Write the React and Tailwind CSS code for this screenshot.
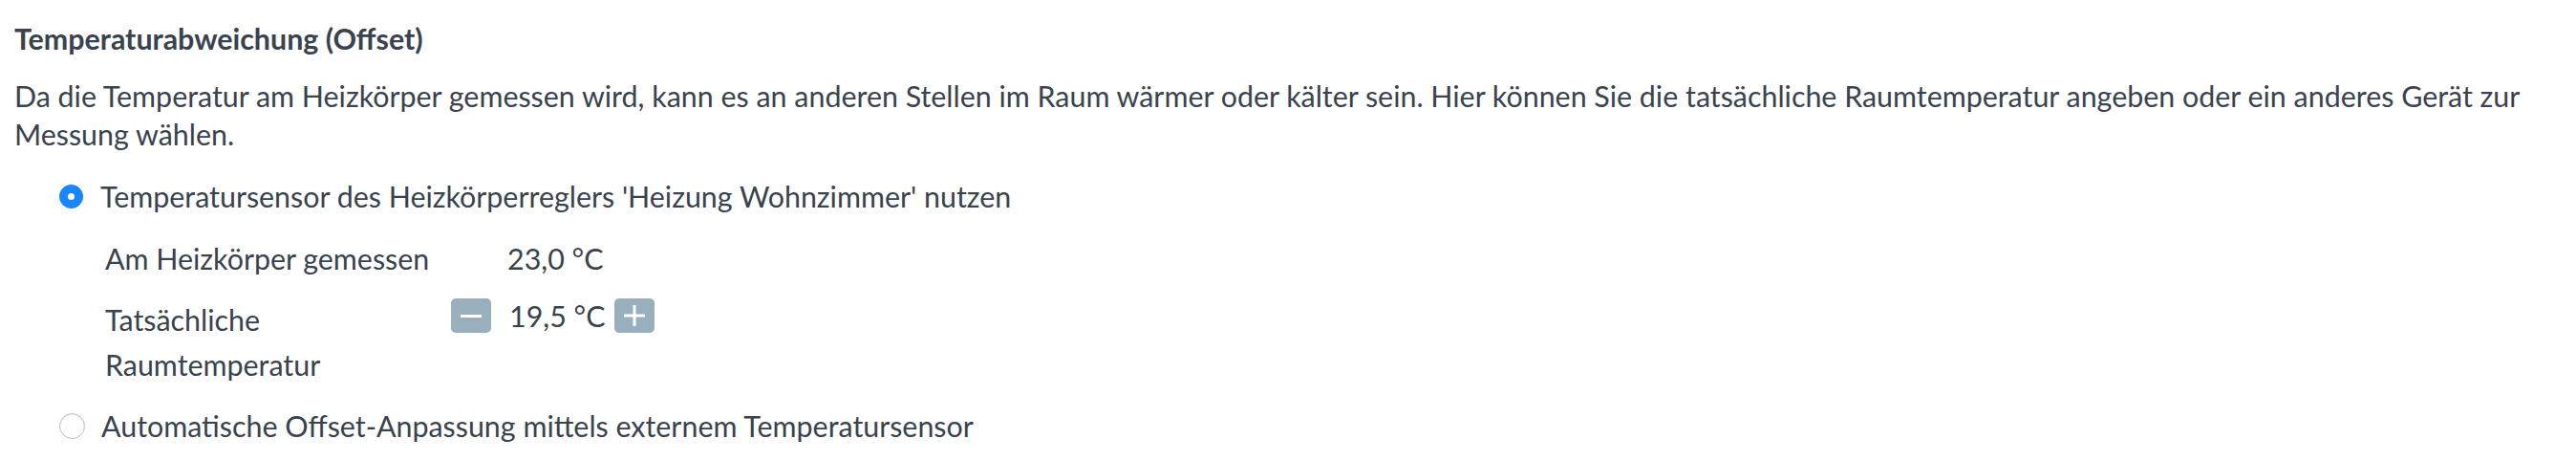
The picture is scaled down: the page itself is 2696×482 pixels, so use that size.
import React from "react";

function StepButton({ children, className = "" }) {
  return (
    <button className={`flex h-[36px] w-[42px] items-center justify-center rounded-[5px] bg-[#9aafbd] ${className}`}>
      {children}
    </button>
  );
}

export default function App() {
  return (
    <div className="min-h-[482px] bg-white px-[15px] pt-[20px] text-[#3a434d]" style={{ fontFamily: "Lato, sans-serif" }}>
      <h3 className="text-[30.4px] font-bold leading-[40px]">Temperaturabweichung (Offset)</h3>
      <p className="mt-[20px] text-[30.4px] leading-[40px]">
        Da die Temperatur am Heizkörper gemessen wird, kann es an anderen Stellen im Raum wärmer oder kälter sein. Hier können Sie die tatsächliche Raumtemperatur angeben oder ein anderes Gerät zur Messung wählen.
      </p>
      <div className="mt-[25px] pl-[47px] text-[30.4px]">
        <label className="flex items-center gap-[18px] leading-[40px]">
          <span className="flex h-[25px] w-[25px] shrink-0 items-center justify-center rounded-full bg-[#1b84ff]">
            <span className="h-[7px] w-[7px] rounded-full bg-white" />
          </span>
          <span>Temperatursensor des Heizkörperreglers 'Heizung Wohnzimmer' nutzen</span>
        </label>
        <div className="mt-[25px] grid grid-cols-[362px_auto] items-start pl-[48px]">
          <div className="leading-[40px]">Am Heizkörper gemessen</div>
          <div className="pl-[59px] leading-[40px]">23,0 °C</div>
          <div className="mt-[21px] w-[240px] leading-[47px]">Tatsächliche Raumtemperatur</div>
          <div className="mt-[22px] flex items-center">
            <StepButton>
              <span className="h-[3px] w-[22px] bg-white" />
            </StepButton>
            <span className="ml-[19px] mr-[10px] leading-[36px]">19,5 °C</span>
            <StepButton>
              <svg width="22" height="22" viewBox="0 0 22 22">
                <path d="M11 0v22M0 11h22" stroke="#fff" strokeWidth="3" />
              </svg>
            </StepButton>
          </div>
        </div>
        <label className="mt-[20px] flex items-center gap-[17px] leading-[40px]">
          <span className="h-[27px] w-[27px] shrink-0 rounded-full border border-[#bdbdbd] bg-white shadow-[inset_0_1px_2px_rgba(0,0,0,0.1)]" />
          <span>Automatische Offset-Anpassung mittels externem Temperatursensor</span>
        </label>
      </div>
    </div>
  );
}
